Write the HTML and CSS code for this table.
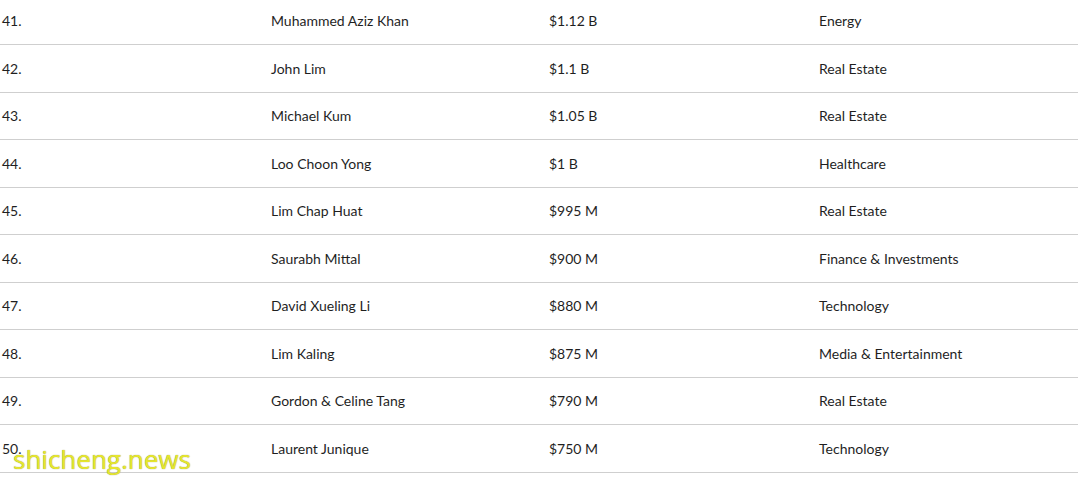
FILE: index.html
```html
<!DOCTYPE html>
<html>
<head>
<meta charset="utf-8">
<link rel="stylesheet" href="styles.css">
</head>
<body>
<div class="page">
  <div class="list">
    <div class="row"><span>41.</span><span>Muhammed Aziz Khan</span><span>$1.12 B</span><span>Energy</span></div>
    <div class="row"><span>42.</span><span>John Lim</span><span>$1.1 B</span><span>Real Estate</span></div>
    <div class="row"><span>43.</span><span>Michael Kum</span><span>$1.05 B</span><span>Real Estate</span></div>
    <div class="row"><span>44.</span><span>Loo Choon Yong</span><span>$1 B</span><span>Healthcare</span></div>
    <div class="row"><span>45.</span><span>Lim Chap Huat</span><span>$995 M</span><span>Real Estate</span></div>
    <div class="row"><span>46.</span><span>Saurabh Mittal</span><span>$900 M</span><span>Finance &amp; Investments</span></div>
    <div class="row"><span>47.</span><span>David Xueling Li</span><span>$880 M</span><span>Technology</span></div>
    <div class="row"><span>48.</span><span>Lim Kaling</span><span>$875 M</span><span>Media &amp; Entertainment</span></div>
    <div class="row"><span>49.</span><span>Gordon &amp; Celine Tang</span><span>$790 M</span><span>Real Estate</span></div>
    <div class="row"><span>50.</span><span>Laurent Junique</span><span>$750 M</span><span>Technology</span></div>
  </div>
  <div class="watermark">shicheng.news</div>
</div>
</body>
</html>
```

FILE: styles.css
```css
html, body {
  margin: 0;
  padding: 0;
  background: #ffffff;
}
.page {
  position: relative;
  width: 1080px;
  height: 480px;
  overflow: hidden;
  font-family: "Lato", "Liberation Sans", sans-serif;
  font-size: 14px;
  color: #1f1f1f;
}
.list {
  margin-top: -2.5px;
  width: 1078px;
}
.row {
  display: grid;
  grid-template-columns: 269px 278px 270px 1fr;
  align-items: center;
  height: 46.5px;
  border-bottom: 1px solid #cfcfcf;
  padding-left: 2px;
}
.watermark {
  position: absolute;
  left: 13px;
  top: 441px;
  font-family: "Open Sans", "DejaVu Sans", sans-serif;
  font-size: 26px;
  color: #e6e62e;
  text-shadow: 0 0 1px #8a8a20;
}
```
